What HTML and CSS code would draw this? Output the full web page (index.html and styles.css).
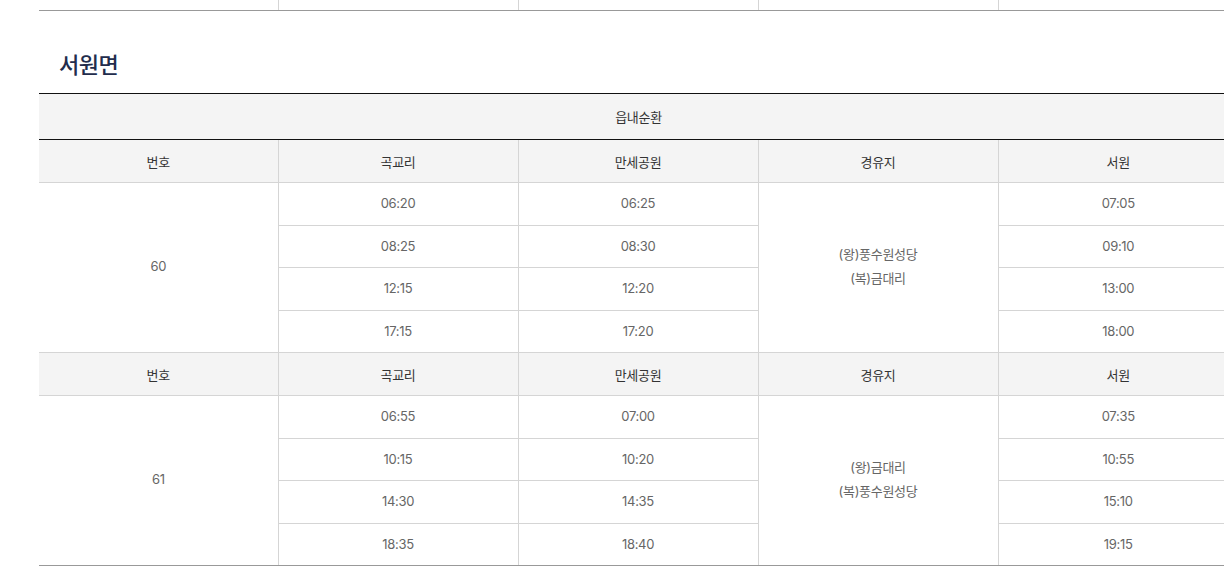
FILE: index.html
```html
<!DOCTYPE html>
<html lang="ko">
<head>
<meta charset="utf-8">
<title>서원면 시간표</title>
<link rel="stylesheet" href="styles.css">
</head>
<body>
<div class="page">
  <table class="tbl prev">
    <colgroup><col class="c-first"><col><col><col><col></colgroup>
    <tr><td></td><td></td><td></td><td></td><td></td></tr>
  </table>

  <h2 class="area-title">서원면</h2>

  <table class="tbl">
    <colgroup><col class="c-first"><col><col><col><col></colgroup>
    <thead>
      <tr class="route"><th colspan="5">읍내순환</th></tr>
    </thead>
    <tbody>
      <tr class="head">
        <th>번호</th><th>곡교리</th><th>만세공원</th><th>경유지</th><th>서원</th>
      </tr>
      <tr>
        <td rowspan="4" class="num">60</td><td>06:20</td><td>06:25</td>
        <td rowspan="4" class="via"><p>(왕)풍수원성당</p><p>(복)금대리</p></td>
        <td>07:05</td>
      </tr>
      <tr><td>08:25</td><td>08:30</td><td>09:10</td></tr>
      <tr><td>12:15</td><td>12:20</td><td>13:00</td></tr>
      <tr><td>17:15</td><td>17:20</td><td>18:00</td></tr>
      <tr class="head">
        <th>번호</th><th>곡교리</th><th>만세공원</th><th>경유지</th><th>서원</th>
      </tr>
      <tr>
        <td rowspan="4" class="num">61</td><td>06:55</td><td>07:00</td>
        <td rowspan="4" class="via"><p>(왕)금대리</p><p>(복)풍수원성당</p></td>
        <td>07:35</td>
      </tr>
      <tr><td>10:15</td><td>10:20</td><td>10:55</td></tr>
      <tr><td>14:30</td><td>14:35</td><td>15:10</td></tr>
      <tr class="last"><td>18:35</td><td>18:40</td><td>19:15</td></tr>
    </tbody>
  </table>
</div>
</body>
</html>
```

FILE: styles.css
```css
html, body {
  margin: 0;
  padding: 0;
  background: #fff;
  overflow: hidden;
}

body {
  font-family: "Inter", "Noto Sans CJK KR", sans-serif;
  color: #333;
}

.page {
  padding-left: 39px;
  width: 1200px;
}

.tbl {
  width: 1199px;
  border-collapse: collapse;
  table-layout: fixed;
  font-size: 13px;
  letter-spacing: -0.3px;
}

.tbl col {
  width: 240px;
}

.tbl col.c-first {
  width: 239px;
}

.tbl th,
.tbl td {
  padding: 0;
  text-align: center;
  vertical-align: middle;
  border-left: 1px solid #d5d5d5;
  border-bottom: 1px solid #d5d5d5;
  font-weight: 400;
}

.tbl tr > :first-child {
  border-left: none;
}

.tbl td {
  height: 40.5px;
  color: #666;
  padding-bottom: 1px;
}

.tbl td.num {
  border-left: none;
  border-right: 1px solid #d5d5d5;
  padding-bottom: 3px;
}

.tbl td.via {
  border-left: 1px solid #d5d5d5;
  border-right: 1px solid #d5d5d5;
  padding-bottom: 4px;
}

.tbl.prev td {
  height: 10px;
  padding: 0;
  border-bottom: 1px solid #999;
}

.area-title {
  margin: 39px 0 13px 20px;
  font-size: 22px;
  line-height: 30px;
  font-weight: 500;
  color: #222c4c;
  letter-spacing: -0.5px;
}

.route th {
  height: 45px;
  background: #f4f4f4;
  border-top: 1px solid #111;
  border-bottom: 1px solid #111;
  color: #333;
}

.head th {
  height: 42px;
  background: #f4f4f4;
  color: #333;
}

.tbl tr.last td,
.tbl td[rowspan] {
  border-bottom: 1px solid #999;
}

.tbl tr:nth-child(2) > td[rowspan] {
  border-bottom-color: #d5d5d5;
}

.via p {
  margin: 0;
  line-height: 24px;
}
```
